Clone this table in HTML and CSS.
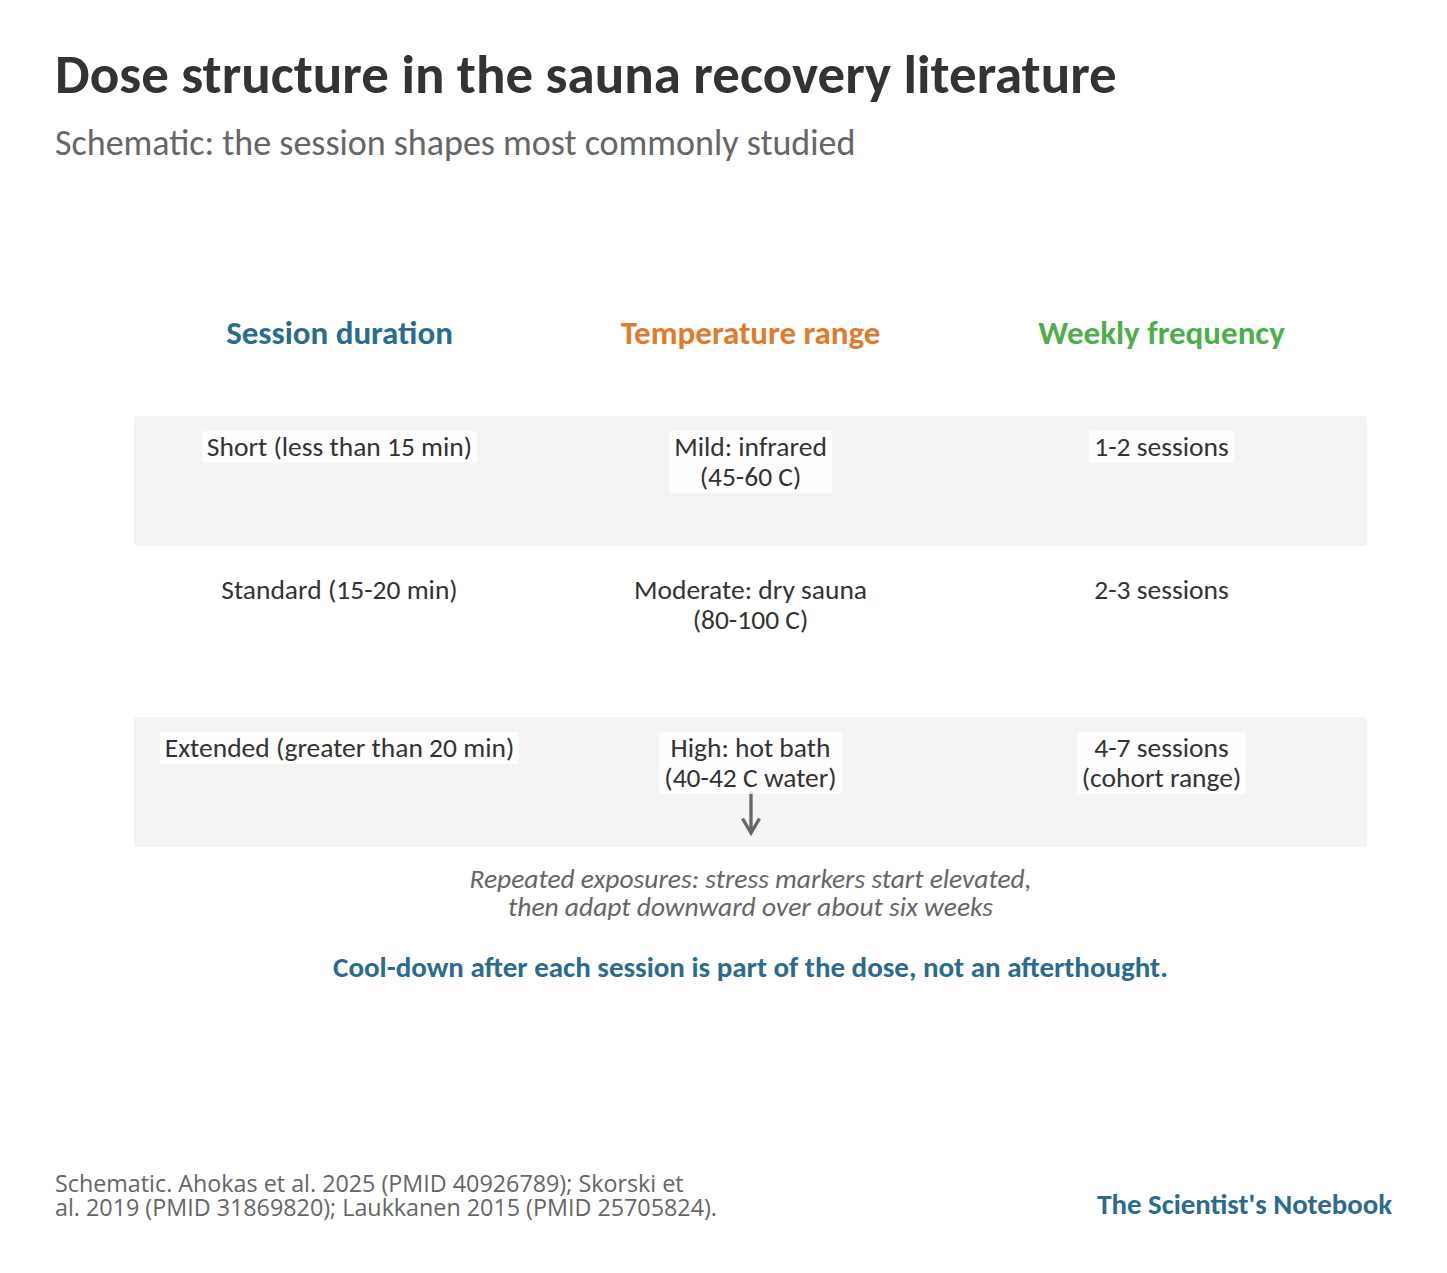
FILE: index.html
```html
<!DOCTYPE html>
<html lang="en">
<head>
<meta charset="utf-8">
<title>Dose structure in the sauna recovery literature</title>
<link rel="stylesheet" href="styles.css">
</head>
<body>
<div class="page">
  <header class="head">
    <h1 class="title">Dose structure in the sauna recovery literature</h1>
    <p class="subtitle">Schematic: the session shapes most commonly studied</p>
  </header>

  <section class="chart">
    <div class="cols heads">
      <div class="col-head blue">Session duration</div>
      <div class="col-head orange">Temperature range</div>
      <div class="col-head green">Weekly frequency</div>
    </div>

    <div class="cols row band">
      <div class="cell"><span class="label">Short (less than 15 min)</span></div>
      <div class="cell"><span class="label">Mild: infrared<br>(45-60 C)</span></div>
      <div class="cell"><span class="label">1-2 sessions</span></div>
    </div>

    <div class="cols row plain">
      <div class="cell"><span class="label">Standard (15-20 min)</span></div>
      <div class="cell"><span class="label">Moderate: dry sauna<br>(80-100 C)</span></div>
      <div class="cell"><span class="label">2-3 sessions</span></div>
    </div>

    <div class="cols row band">
      <div class="cell"><span class="label">Extended (greater than 20 min)</span></div>
      <div class="cell">
        <span class="label">High: hot bath<br>(40-42 C water)</span>
        <svg class="arrow" width="22" height="45" viewBox="0 0 22 45" aria-hidden="true">
          <path d="M11 0 V42 M2.5 27.5 L11 42 L19.5 27.5" fill="none" stroke="#666" stroke-width="3.3" stroke-linecap="butt" stroke-linejoin="miter"/>
        </svg>
      </div>
      <div class="cell"><span class="label">4-7 sessions<br>(cohort range)</span></div>
    </div>

    <p class="note">Repeated exposures: stress markers start elevated,<br>then adapt downward over about six weeks</p>
    <p class="takeaway">Cool-down after each session is part of the dose, not an afterthought.</p>
  </section>

  <footer class="foot">
    <p class="source">Schematic. Ahokas et al. 2025 (PMID 40926789); Skorski et<br>al. 2019 (PMID 31869820); Laukkanen 2015 (PMID 25705824).</p>
    <p class="brand">The Scientist's Notebook</p>
  </footer>
</div>
</body>
</html>
```

FILE: styles.css
```css
* { box-sizing: border-box; }
html, body { margin: 0; padding: 0; background: #fff; }
body {
  font-family: Carlito, Calibri, "Noto Sans", sans-serif;
  color: #333;
}
.page {
  width: 1447px;
  height: 1273px;
  padding: 43px 55px 0 55px;
  display: flex;
  flex-direction: column;
}
.title {
  margin: 0;
  font-size: 55px;
  line-height: 64px;
  font-weight: 700;
  color: #333;
}
.subtitle {
  margin: 15px 0 0 0;
  font-size: 36px;
  line-height: 42px;
  color: #666;
}
.chart {
  margin: 149px 0 0 79px;
  width: 1233px;
}
.cols {
  display: grid;
  grid-template-columns: repeat(3, 1fr);
}
.heads { height: 40px; margin-bottom: 63px; }
.col-head {
  text-align: center;
  font-size: 33px;
  line-height: 40px;
  font-weight: 700;
}
.blue { color: #2b6b8e; }
.orange { color: #e07a2c; }
.green { color: #4cae4c; }
.row { height: 130px; }
.band { background: #f4f4f4; border-radius: 3px; padding-top: 15px; }
.plain { height: 171px; padding-top: 28px; }
.cell {
  display: flex;
  flex-direction: column;
  align-items: center;
  font-size: 27.5px;
  line-height: 30px;
  color: #333;
  text-align: center;
}
.label {
  position: relative;
  z-index: 1;
  background: rgba(255,255,255,0.8);
  border-radius: 3px;
  padding: 1px 5px;
}
.arrow { display: block; margin-top: -3px; }
.note {
  margin: 18px 0 0 0;
  text-align: center;
  font-style: italic;
  font-size: 27.5px;
  line-height: 28px;
  color: #666;
}
.takeaway {
  margin: 29px 0 0 0;
  text-align: center;
  font-weight: 700;
  font-size: 29px;
  line-height: 34px;
  color: #2b6b8e;
}
.foot {
  margin-top: auto;
  margin-bottom: 54px;
  display: flex;
  justify-content: space-between;
  align-items: flex-end;
}
.source {
  margin: 0;
  white-space: nowrap;
  font-family: "Open Sans", "Noto Sans", sans-serif;
  font-size: 23.3px;
  line-height: 24px;
  color: #666;
}
.brand {
  margin: 0;
  font-size: 28.8px;
  line-height: 28px;
  font-weight: 700;
  color: #2b6b8e;
}
```
